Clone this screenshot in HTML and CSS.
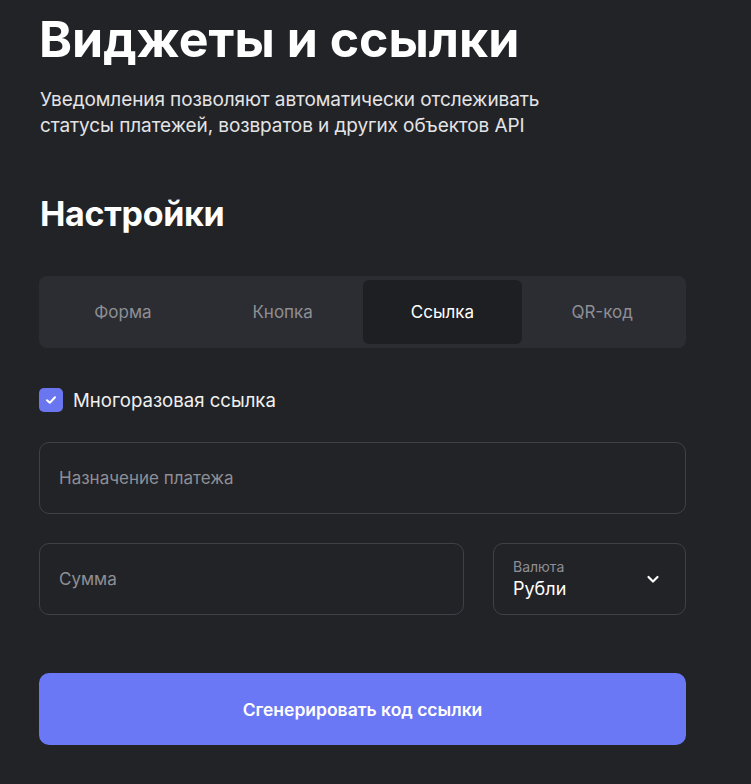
FILE: index.html
```html
<!DOCTYPE html>
<html lang="ru">
<head>
<meta charset="utf-8">
<link rel="stylesheet" href="styles.css">
</head>
<body>
<main class="page">
  <h1 class="title">Виджеты и ссылки</h1>
  <p class="lead">Уведомления позволяют автоматически отслеживать<br>статусы платежей, возвратов и других объектов API</p>
  <h2 class="subtitle">Настройки</h2>
  <div class="tabs">
    <div class="tab">Форма</div>
    <div class="tab">Кнопка</div>
    <div class="tab tab-active">Ссылка</div>
    <div class="tab">QR-код</div>
  </div>
  <label class="check">
    <span class="check-box">
      <svg width="14" height="14" viewBox="0 0 14 14"><path d="M3 7.2 L5.8 9.8 L11 4.2" fill="none" stroke="#fff" stroke-width="2" stroke-linecap="round" stroke-linejoin="round"/></svg>
    </span>
    <span class="check-label">Многоразовая ссылка</span>
  </label>
  <div class="field field-full"><span class="placeholder">Назначение платежа</span></div>
  <div class="row">
    <div class="field field-sum"><span class="placeholder">Сумма</span></div>
    <div class="field field-select">
      <div class="select-text">
        <span class="select-label">Валюта</span>
        <span class="select-value">Рубли</span>
      </div>
      <svg class="chevron" width="16" height="16" viewBox="0 0 16 16"><path d="M3.5 6 L8 10.5 L12.5 6" fill="none" stroke="#fff" stroke-width="2.2" stroke-linecap="round" stroke-linejoin="round"/></svg>
    </div>
  </div>
  <button class="btn">Сгенерировать код ссылки</button>
</main>
</body>
</html>
```
FILE: styles.css
```css
html, body {
  margin: 0;
  padding: 0;
  background: #222327;
}
body {
  font-family: Inter, "Noto Sans", sans-serif;
  color: #ffffff;
}
.page {
  padding: 9px 65px 0 39px;
  display: flex;
  flex-direction: column;
}
.title {
  margin: 0;
  font-size: 50px;
  font-weight: 700;
  line-height: 60px;
  letter-spacing: 0;
}
.lead {
  margin: 18px 0 0 1px;
  font-size: 19px;
  line-height: 26px;
  color: #e4e4e6;
  letter-spacing: -0.1px;
}
.subtitle {
  margin: 53px 0 0 1px;
  font-size: 34px;
  font-weight: 700;
  line-height: 44px;
  letter-spacing: -0.3px;
}
.tabs {
  margin-top: 40px;
  background: #2c2d32;
  border-radius: 8px;
  padding: 4px;
  display: grid;
  grid-template-columns: repeat(4, 1fr);
  height: 72px;
  box-sizing: border-box;
}
.tab {
  display: flex;
  align-items: center;
  justify-content: center;
  font-size: 17px;
  color: #8e8f95;
  border-radius: 6px;
}
.tab-active {
  background: #1e1f23;
  color: #ffffff;
}
.check {
  margin-top: 40px;
  display: flex;
  align-items: center;
  gap: 10px;
}
.check-box {
  width: 24px;
  height: 24px;
  border-radius: 5px;
  background: #6a75f0;
  display: flex;
  align-items: center;
  justify-content: center;
}
.check-label {
  font-size: 18.6px;
  color: #f0f0f2;
}
.field {
  box-sizing: border-box;
  height: 72px;
  border: 1px solid #404147;
  border-radius: 10px;
  display: flex;
  align-items: center;
  padding: 0 19px;
}
.field-full {
  margin-top: 30px;
}
.placeholder {
  font-size: 17px;
  color: #8e8f95;
}
.row {
  margin-top: 29px;
  display: flex;
  gap: 29px;
}
.field-sum {
  flex: 1;
}
.field-select {
  width: 193px;
  justify-content: space-between;
  padding-right: 24px;
}
.select-text {
  display: flex;
  flex-direction: column;
  gap: 2px;
}
.select-label {
  font-size: 14px;
  color: #8e8f95;
  line-height: 18px;
}
.select-value {
  font-size: 18px;
  line-height: 22px;
  color: #ffffff;
}
.btn {
  margin-top: 58px;
  height: 72px;
  border: 0;
  border-radius: 10px;
  background: #6b78f6;
  color: #ffffff;
  font-family: Inter, "Noto Sans", sans-serif;
  font-size: 17.5px;
  font-weight: 600;
}
```
